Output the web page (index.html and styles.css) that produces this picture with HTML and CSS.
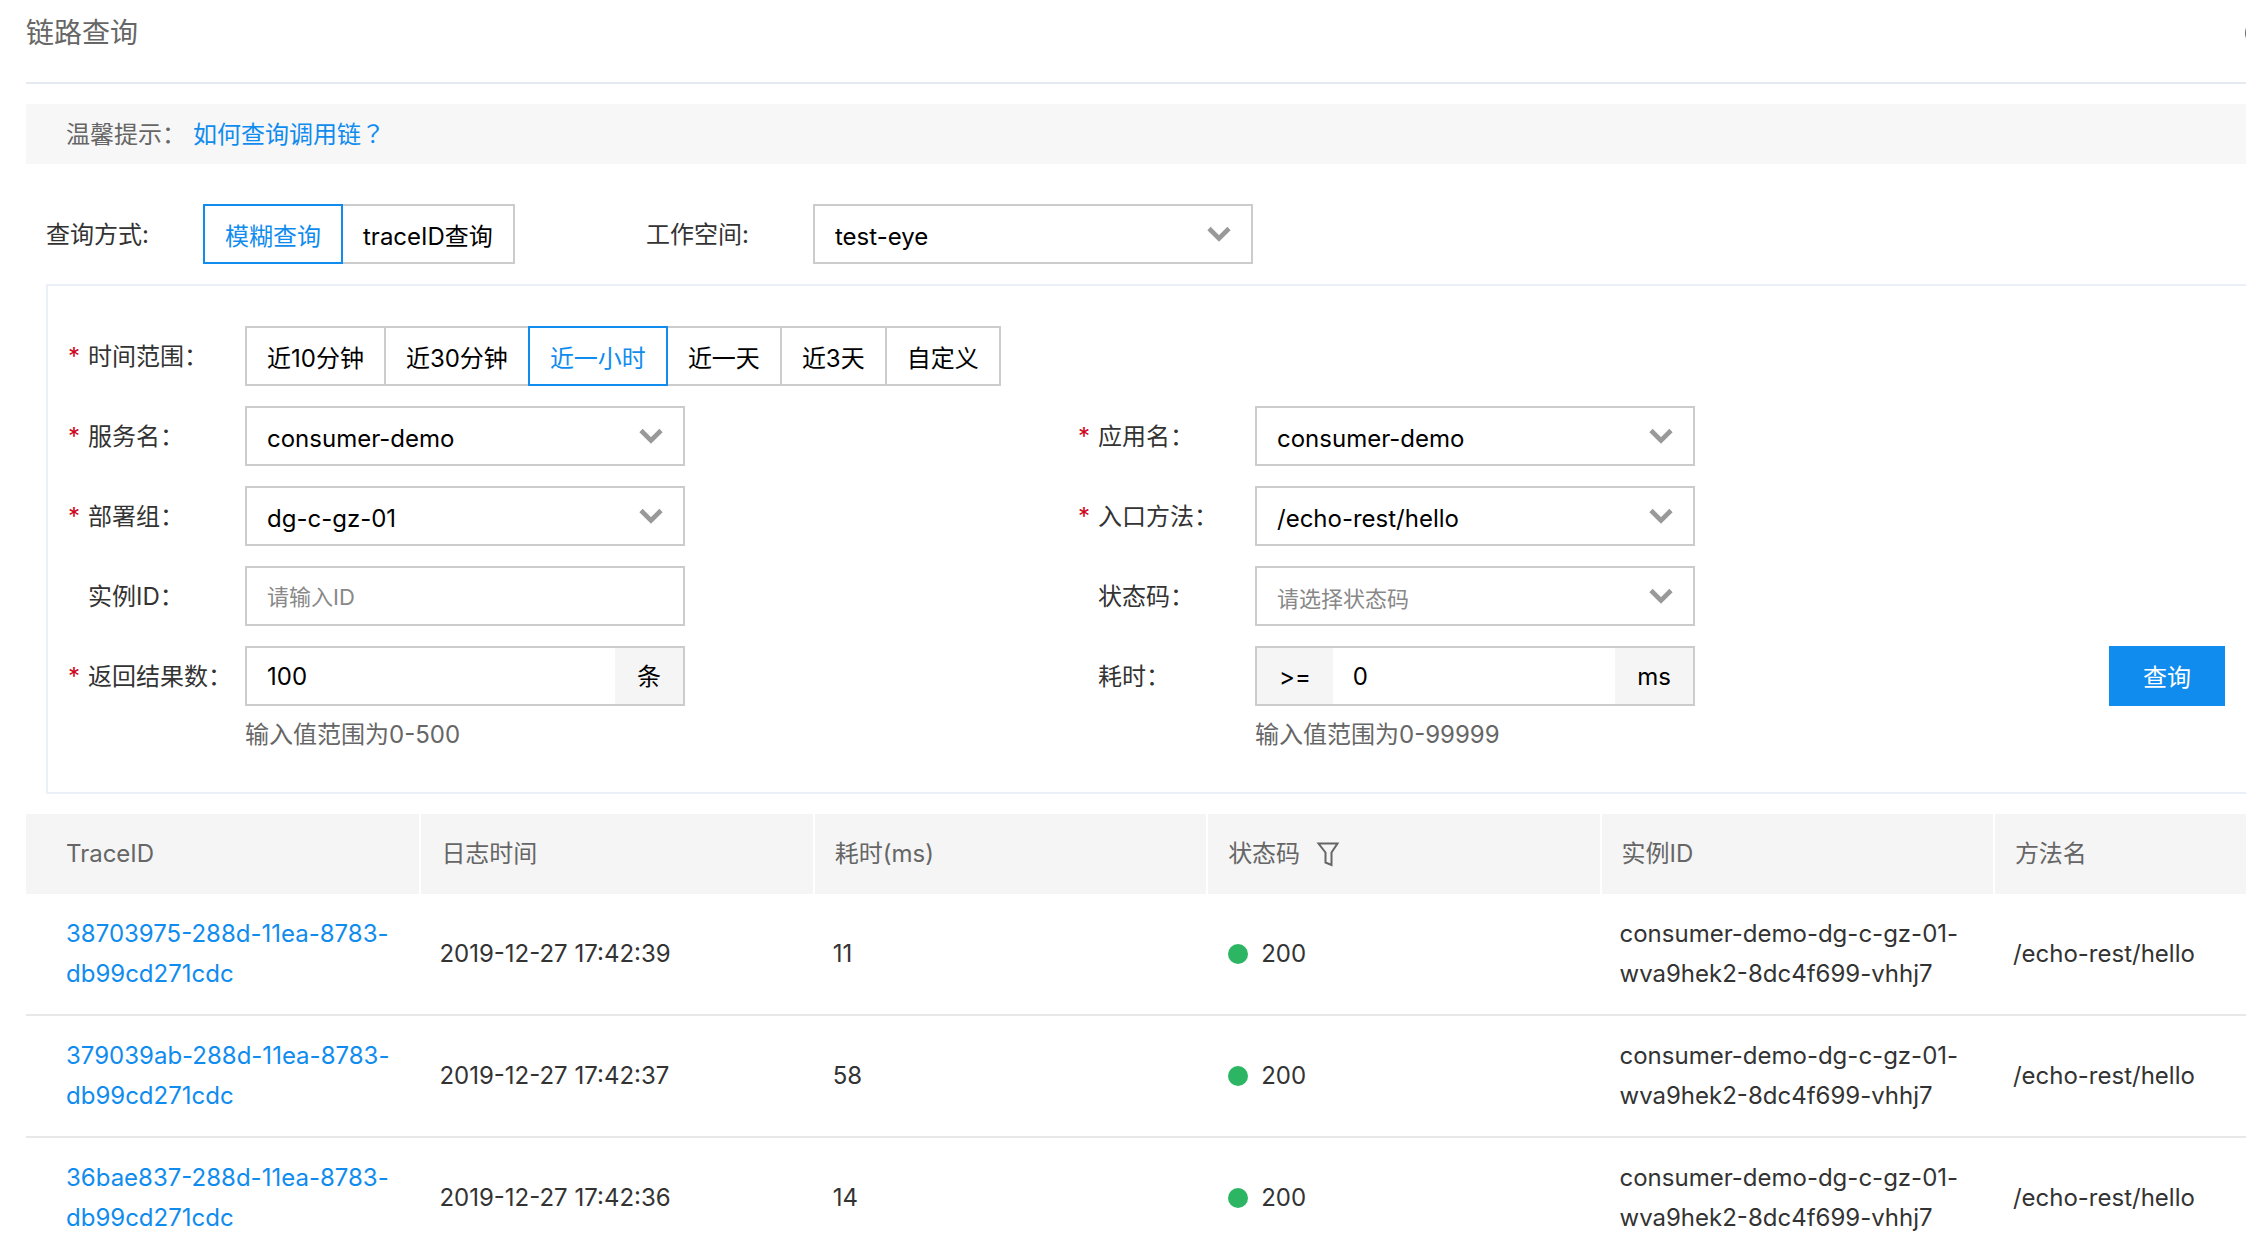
FILE: index.html
```html
<!DOCTYPE html>
<html lang="zh-CN">
<head>
<meta charset="utf-8">
<title>链路查询</title>
<link rel="stylesheet" href="styles.css">
</head>
<body>
<svg class="sprite" aria-hidden="true">
  <symbol id="chevron" viewBox="0 0 24 16"><path d="M2 2.5 12 12.5 22 2.5" fill="none" stroke="currentColor" stroke-width="4.6"/></symbol>
</svg>
<main class="page">
  <header class="page-head">
    <h1 class="page-title">链路查询</h1>
    <svg class="head-icon" viewBox="0 0 28 28" aria-hidden="true"><circle cx="14" cy="14" r="13" fill="none" stroke="currentColor" stroke-width="2"/></svg>
  </header>

  <p class="tip"><span>温馨提示：</span><a class="link" href="#help">如何查询调用链<span lang="zh-TW">？</span></a></p>

  <form class="search">
    <div class="mode-row">
      <span class="mode-label">查询方式:</span>
      <div class="segment mode-segment">
        <button type="button" class="seg-btn active">模糊查询</button>
        <button type="button" class="seg-btn">traceID查询</button>
      </div>
      <label class="mode-label space-label" for="workspace">工作空间:</label>
      <div class="select-box">
        <select id="workspace" class="select"><option>test-eye</option></select>
        <svg class="chevron"><use href="#chevron"/></svg>
      </div>
    </div>

    <div class="panel">
      <div class="field wide">
        <span class="label required">时间范围：</span>
        <div class="segment">
          <button type="button" class="seg-btn">近10分钟</button>
          <button type="button" class="seg-btn">近30分钟</button>
          <button type="button" class="seg-btn active">近一小时</button>
          <button type="button" class="seg-btn">近一天</button>
          <button type="button" class="seg-btn">近3天</button>
          <button type="button" class="seg-btn">自定义</button>
        </div>
      </div>

      <div class="field">
        <label class="label required" for="service">服务名：</label>
        <div class="select-box">
          <select id="service" class="select"><option>consumer-demo</option></select>
          <svg class="chevron"><use href="#chevron"/></svg>
        </div>
      </div>
      <div class="field">
        <label class="label required" for="app">应用名：</label>
        <div class="select-box">
          <select id="app" class="select"><option>consumer-demo</option></select>
          <svg class="chevron"><use href="#chevron"/></svg>
        </div>
      </div>

      <div class="field first">
        <label class="label required" for="group">部署组：</label>
        <div class="select-box">
          <select id="group" class="select"><option>dg-c-gz-01</option></select>
          <svg class="chevron"><use href="#chevron"/></svg>
        </div>
      </div>
      <div class="field">
        <label class="label required" for="method">入口方法：</label>
        <div class="select-box">
          <select id="method" class="select"><option>/echo-rest/hello</option></select>
          <svg class="chevron"><use href="#chevron"/></svg>
        </div>
      </div>

      <div class="field first">
        <label class="label" for="instance">实例ID：</label>
        <input id="instance" class="input" type="text" placeholder="请输入ID">
      </div>
      <div class="field">
        <label class="label" for="status">状态码：</label>
        <div class="select-box">
          <select id="status" class="select empty"><option>请选择状态码</option></select>
          <svg class="chevron"><use href="#chevron"/></svg>
        </div>
      </div>

      <div class="field first">
        <label class="label required" for="limit">返回结果数：</label>
        <div class="input-group">
          <input id="limit" class="group-input" type="text" value="100">
          <span class="addon">条</span>
        </div>
        <p class="hint">输入值范围为0-500</p>
      </div>
      <div class="field">
        <label class="label" for="cost">耗时：</label>
        <div class="input-group">
          <span class="addon">&gt;=</span>
          <input id="cost" class="group-input" type="text" value="0">
          <span class="addon">ms</span>
        </div>
        <p class="hint">输入值范围为0-99999</p>
      </div>
      <button type="submit" class="submit">查询</button>
    </div>
  </form>

  <table class="table">
    <thead>
      <tr>
        <th scope="col">TraceID</th>
        <th scope="col">日志时间</th>
        <th scope="col">耗时(ms)</th>
        <th scope="col"><span class="filter-head">状态码<svg class="filter" viewBox="0 0 24 26" aria-hidden="true"><path d="M2.500 2.500H21.500L15.500 11.500V24L9.500 21.500V11.500Z" fill="none" stroke="currentColor" stroke-width="2"/></svg></span></th>
        <th scope="col">实例ID</th>
        <th scope="col" class="last">方法名</th>
      </tr>
    </thead>
    <tbody>
      <tr>
        <td><a class="link" href="#trace-1">38703975-288d-11ea-8783-db99cd271cdc</a></td>
        <td>2019-12-27 17:42:39</td>
        <td>11</td>
        <td><span class="status">200</span></td>
        <td>consumer-demo-dg-c-gz-01-wva9hek2-8dc4f699-vhhj7</td>
        <td>/echo-rest/hello</td>
      </tr>
      <tr>
        <td><a class="link" href="#trace-2">379039ab-288d-11ea-8783-db99cd271cdc</a></td>
        <td>2019-12-27 17:42:37</td>
        <td>58</td>
        <td><span class="status">200</span></td>
        <td>consumer-demo-dg-c-gz-01-wva9hek2-8dc4f699-vhhj7</td>
        <td>/echo-rest/hello</td>
      </tr>
      <tr>
        <td><a class="link" href="#trace-3">36bae837-288d-11ea-8783-db99cd271cdc</a></td>
        <td>2019-12-27 17:42:36</td>
        <td>14</td>
        <td><span class="status">200</span></td>
        <td>consumer-demo-dg-c-gz-01-wva9hek2-8dc4f699-vhhj7</td>
        <td>/echo-rest/hello</td>
      </tr>
    </tbody>
  </table>
</main>
</body>
</html>
```
FILE: styles.css
```css
* { box-sizing: border-box; }

body {
  margin: 0;
  background: #fff;
  color: #333;
  font: 24px/40px Inter, "Noto Sans CJK SC", sans-serif;
  overflow-x: hidden;
}

button, input, select {
  font: inherit;
  color: #000;
  margin: 0;
  border-radius: 0;
}

h1, p { margin: 0; }

.sprite { display: none; }

.page { padding-left: 26px; }

.page-head {
  display: flex;
  align-items: center;
  justify-content: space-between;
  height: 84px;
  padding-bottom: 16px;
  border-bottom: 2px solid #e5e9f0;
  color: #666;
}

.page-title {
  font-size: 28px;
  font-weight: 400;
}

.head-icon {
  width: 28px;
  height: 28px;
  margin-right: -27px;
}

.tip {
  display: flex;
  gap: 7px;
  margin-top: 20px;
  padding: 11px 40px 9px;
  background: #f7f7f7;
  color: #666;
}

.link {
  color: #108cee;
  text-decoration: none;
}

/* Search form */

.search { padding: 40px 0 20px 20px; }

.mode-row {
  display: flex;
  align-items: center;
}

.mode-label {
  width: 157px;
  padding-top: 2px;
}

.mode-segment { width: 443px; }

.space-label { width: 167px; }

.segment { display: flex; }

.seg-btn {
  height: 60px;
  padding: 6px 20px 0;
  background: #fff;
  border: 2px solid #ccc;
}

.seg-btn + .seg-btn { margin-left: -2px; }

.seg-btn.active {
  z-index: 1;
  color: #108cee;
  border-color: #108cee;
}

.panel {
  display: grid;
  grid-template-columns: 1fr 1fr 137px;
  row-gap: 20px;
  margin-top: 20px;
  padding: 40px 21px 26px 20px;
  border: 2px solid #ebeff8;
  border-right: 0;
}

.field {
  display: grid;
  grid-template-columns: 177px 440px;
  align-items: center;
  align-content: start;
}

.field.wide {
  grid-column: 1 / -1;
  grid-template-columns: 177px 1fr;
}

.field.first { grid-column: 1; }

.label { padding: 2px 0 0 20px; }

.label.required { padding-left: 0; }

.label.required::before {
  content: "*";
  display: inline-block;
  width: 20px;
  color: #d0021b;
}

.select-box {
  display: grid;
  align-items: center;
  width: 440px;
}

.select {
  grid-area: 1 / 1;
  appearance: none;
  width: 100%;
  height: 60px;
  padding: 6px 56px 0 20px;
  background: #fff;
  border: 2px solid #ccc;
}

.select.empty {
  font-size: 22px;
  color: #888;
}

.chevron {
  grid-area: 1 / 1;
  justify-self: end;
  width: 24px;
  height: 16px;
  margin-right: 22px;
  color: #999;
  pointer-events: none;
}

.input {
  width: 100%;
  height: 60px;
  padding: 0 20px;
  background: #fff;
  border: 2px solid #ccc;
}

.input::placeholder {
  font-size: 22px;
  color: #888;
}

.input-group {
  display: flex;
  height: 60px;
  border: 2px solid #ccc;
}

.group-input {
  flex: 1;
  min-width: 0;
  padding: 2px 20px 0;
  background: #fff;
  border: 0;
}

.addon {
  padding: 9px 22px 7px;
  background: #f5f5f5;
  color: #000;
}

.hint {
  grid-column: 2;
  padding: 9px 0 11px;
  color: #666;
}

.submit {
  justify-self: end;
  width: 116px;
  height: 60px;
  padding: 4px 0 0;
  background: #108cee;
  border: 0;
  color: #fff;
}

/* Results */

.table {
  width: 100%;
  table-layout: fixed;
  border-collapse: separate;
  border-spacing: 0;
}

.table th,
.table td {
  padding: 20px;
  text-align: left;
}

.table th:first-child,
.table td:first-child { padding-left: 40px; }

.table td:first-child { padding-right: 12px; }

.table th {
  width: 17.72%;
  background: #f5f5f5;
  color: #666;
  font-weight: 400;
}

.table th + th { border-left: 2px solid #fff; }

.table th.last { width: auto; }

.table td { border-bottom: 2px solid #e8e8e8; }

.filter-head {
  display: flex;
  align-items: center;
  gap: 16px;
}

.filter {
  width: 24px;
  height: 26px;
}

.status {
  display: flex;
  align-items: center;
  gap: 13px;
  padding-left: 2px;
}

.status::before {
  content: "";
  width: 20px;
  height: 20px;
  border-radius: 50%;
  background: #2cb663;
}
```
